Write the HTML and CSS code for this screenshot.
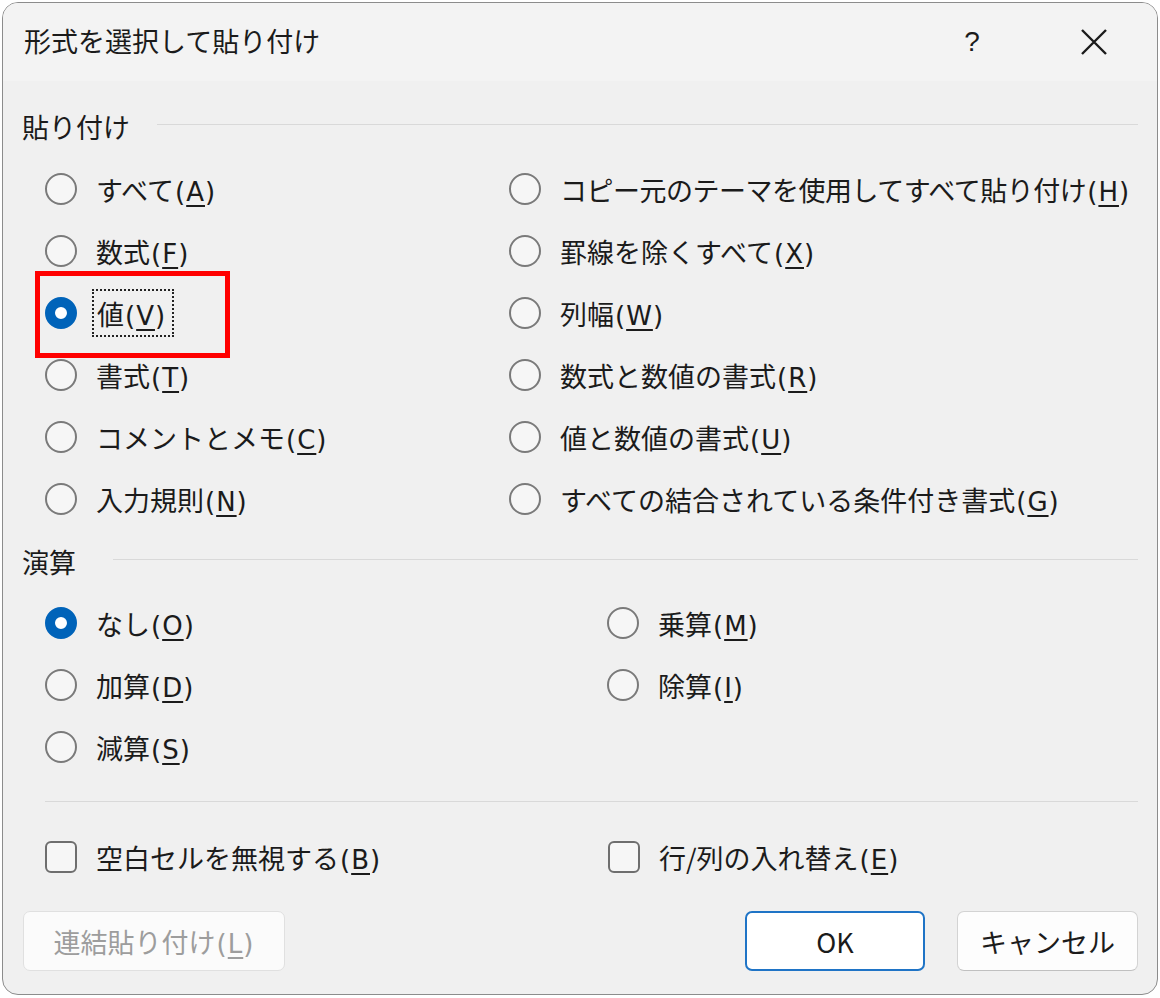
FILE: index.html
```html
<!DOCTYPE html>
<html lang="ja">
<head>
    <meta charset="UTF-8">
    <title>形式を選択して貼り付け</title>
    <link rel="stylesheet" href="styles.css">
</head>
<body>
    <div class="dialog">
        <div class="titlebar">
            <span class="title">形式を選択して貼り付け</span>
            <span class="help">?</span>
            <span class="close">
                <svg width="28" height="28" viewBox="0 0 28 28"><path d="M2 2 L26 26 M26 2 L2 26" stroke="#1b1b1b" stroke-width="2.4" fill="none"/></svg>
            </span>
        </div>

        <div class="content">
            <!-- 貼り付け -->
            <div class="section first">
                <span>貼り付け</span>
                <div class="rule"></div>
            </div>
            <div class="grid paste">
                <label class="opt"><span class="radio"></span><span>すべて<span class="key">(<u>A</u>)</span></span></label>
                <label class="opt"><span class="radio"></span><span class="tight">コピー元のテーマを使用してすべて貼り付け<span class="key">(<u>H</u>)</span></span></label>
                <label class="opt"><span class="radio"></span><span>数式<span class="key">(<u>F</u>)</span></span></label>
                <label class="opt"><span class="radio"></span><span>罫線を除くすべて<span class="key">(<u>X</u>)</span></span></label>
                <label class="opt"><span class="radio on"></span><span class="focus">値<span class="key">(<u>V</u>)</span></span></label>
                <label class="opt"><span class="radio"></span><span>列幅<span class="key">(<u>W</u>)</span></span></label>
                <label class="opt"><span class="radio"></span><span>書式<span class="key">(<u>T</u>)</span></span></label>
                <label class="opt"><span class="radio"></span><span>数式と数値の書式<span class="key">(<u>R</u>)</span></span></label>
                <label class="opt"><span class="radio"></span><span>コメントとメモ<span class="key">(<u>C</u>)</span></span></label>
                <label class="opt"><span class="radio"></span><span>値と数値の書式<span class="key">(<u>U</u>)</span></span></label>
                <label class="opt"><span class="radio"></span><span>入力規則<span class="key">(<u>N</u>)</span></span></label>
                <label class="opt"><span class="radio"></span><span>すべての結合されている条件付き書式<span class="key">(<u>G</u>)</span></span></label>
            </div>

            <!-- 演算 -->
            <div class="section">
                <span>演算</span>
                <div class="rule"></div>
            </div>
            <div class="grid calc">
                <label class="opt"><span class="radio on"></span><span>なし<span class="key">(<u>O</u>)</span></span></label>
                <label class="opt"><span class="radio"></span><span>乗算<span class="key">(<u>M</u>)</span></span></label>
                <label class="opt"><span class="radio"></span><span>加算<span class="key">(<u>D</u>)</span></span></label>
                <label class="opt"><span class="radio"></span><span>除算<span class="key">(<u>I</u>)</span></span></label>
                <label class="opt"><span class="radio"></span><span>減算<span class="key">(<u>S</u>)</span></span></label>
            </div>

            <div class="divider"></div>

            <div class="grid checks">
                <label class="opt"><span class="check"></span><span>空白セルを無視する<span class="key">(<u>B</u>)</span></span></label>
                <label class="opt"><span class="check"></span><span>行/列の入れ替え<span class="key">(<u>E</u>)</span></span></label>
            </div>
        </div>

        <div class="buttons">
            <button class="btn link" disabled>連結貼り付け<span class="key">(<u>L</u>)</span></button>
            <button class="btn ok">OK</button>
            <button class="btn">キャンセル</button>
        </div>

        <!-- red highlight over the selected option -->
        <div class="highlight"></div>
    </div>
</body>
</html>
```

FILE: styles.css
```css
body {
    margin: 0;
    background: #ffffff;
    font-family: "Noto Sans CJK JP", "Noto Sans", sans-serif;
    color: #1b1b1b;
}
.dialog {
    position: relative;
    width: 1156px;
    height: 993px;
    margin: 2px 0 0 2px;
    box-sizing: border-box;
    border: 1px solid #8c8c8c;
    border-radius: 16px;
    background: #f0f0f0;
    overflow: hidden;
}
.titlebar {
    display: flex;
    align-items: center;
    height: 78px;
    padding-left: 21px;
    background: #f3f3f3;
    font-size: 27px;
}
.title {
    flex: 1;
    margin-top: -4px;
}
.help {
    width: 40px;
    text-align: center;
    font-family: "Liberation Sans", sans-serif;
    font-size: 28px;
    margin-right: 88px;
}
.close {
    display: flex;
    margin-right: 49px;
}
.content {
    padding: 13px 19px 0 19px;
    font-size: 27px;
}
.section {
    display: flex;
    align-items: center;
    height: 62px;
}
.section.first {
    height: 64px;
}
.rule {
    flex: 1;
    height: 1px;
    background: #d9d9d9;
    margin: -4px 0 0 27px;
}
.section:not(.first) .rule {
    margin-left: 37px;
}
.grid {
    display: grid;
    grid-auto-rows: 62px;
    padding-left: 23px;
}
.paste {
    grid-template-columns: 464px 1fr;
}
.calc {
    grid-template-columns: 562px 1fr;
}
.checks {
    grid-template-columns: 563px 1fr;
}
.opt {
    display: flex;
    align-items: center;
    white-space: nowrap;
}
.tight {
    letter-spacing: -0.5px;
}
/* access key part is wider in the original UI font */
.key {
    font-family: "DejaVu Sans", sans-serif;
    font-size: 26px;
    letter-spacing: 1px;
    margin-left: 1px;
}
.key u {
    text-underline-offset: 4px;
    text-decoration-thickness: 2px;
}
.radio {
    width: 32px;
    height: 32px;
    box-sizing: border-box;
    border: 2px solid #7a7a7a;
    border-radius: 50%;
    background: #f6f6f6;
    margin-right: 19px;
    flex-shrink: 0;
}
.radio.on {
    border: 10px solid #0063b9;
    background: #ffffff;
}
.check {
    width: 32px;
    height: 32px;
    box-sizing: border-box;
    border: 2px solid #6e6e6e;
    border-radius: 6px;
    background: #f6f6f6;
    margin-right: 19px;
    flex-shrink: 0;
}
.focus {
    display: inline-block;
    height: 48px;
    line-height: 46px;
    box-sizing: border-box;
    padding: 0 6px 0 3px;
    margin-left: -4px;
    border: 2px dotted #222;
}
.divider {
    height: 1px;
    background: #d9d9d9;
    margin: 23px 0 24px 23px;
}
.buttons {
    display: flex;
    gap: 32px;
    padding: 23px 19px 0 20px;
}
.btn {
    height: 60px;
    box-sizing: border-box;
    border: 1px solid #d3d3d3;
    border-bottom-color: #c0c0c0;
    border-radius: 7px;
    background: #fdfdfd;
    font-family: "Noto Sans CJK JP", sans-serif;
    font-size: 27px;
    color: #1b1b1b;
    width: 181px;
    padding: 0;
}
.btn.link {
    width: 262px;
    margin-right: auto;
    color: #9d9d9d;
    background: #fbfbfb;
    border-color: #e0e0e0;
}
.btn.ok {
    width: 180px;
    background: #ffffff;
    border: 2px solid #1f74c6;
}
.highlight {
    position: absolute;
    left: 32px;
    top: 268px;
    width: 195px;
    height: 87px;
    box-sizing: border-box;
    border: 5px solid #ff0000;
}
```
